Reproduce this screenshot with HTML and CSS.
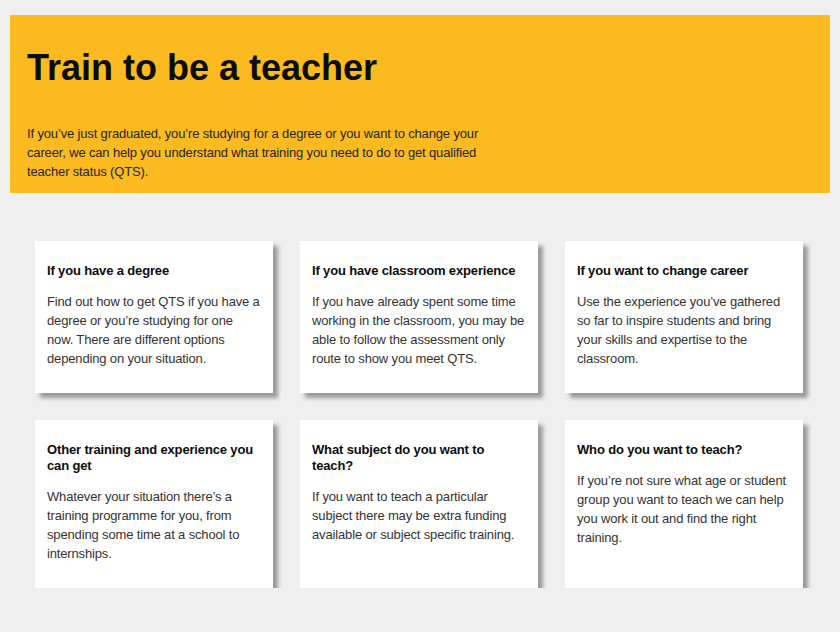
FILE: index.html
```html
<!DOCTYPE html>
<html lang="en">
<head>
<meta charset="utf-8">
<title>Train to be a teacher</title>
<link rel="stylesheet" href="styles.css">
</head>
<body>
<div class="page">
  <header class="hero">
    <h1 class="hero-title">Train to be a teacher</h1>
    <p class="hero-text">If you’ve just graduated, you’re studying for a degree or you want to change your career, we can help you understand what training you need to do to get qualified teacher status (QTS).</p>
  </header>
  <main class="cards">
    <section class="card">
      <h2 class="card-title">If you have a degree</h2>
      <p class="card-text">Find out how to get QTS if you have a degree or you’re studying for one now. There are different options depending on your situation.</p>
    </section>
    <section class="card">
      <h2 class="card-title">If you have classroom experience</h2>
      <p class="card-text">If you have already spent some time working in the classroom, you may be able to follow the assessment only route to show you meet QTS.</p>
    </section>
    <section class="card">
      <h2 class="card-title">If you want to change career</h2>
      <p class="card-text">Use the experience you’ve gathered so far to inspire students and bring your skills and expertise to the classroom.</p>
    </section>
    <section class="card">
      <h2 class="card-title">Other training and experience you can get</h2>
      <p class="card-text">Whatever your situation there’s a training programme for you, from spending some time at a school to internships.</p>
    </section>
    <section class="card">
      <h2 class="card-title">What subject do you want to teach?</h2>
      <p class="card-text">If you want to teach a particular subject there may be extra funding available or subject specific training.</p>
    </section>
    <section class="card">
      <h2 class="card-title">Who do you want to teach?</h2>
      <p class="card-text">If you’re not sure what age or student group you want to teach we can help you work it out and find the right training.</p>
    </section>
  </main>
</div>
</body>
</html>
```

FILE: styles.css
```css
html, body {
  margin: 0;
  padding: 0;
  background: #efefef;
}

body {
  font-family: "Liberation Sans", Arial, sans-serif;
  color: #333333;
}

.page {
  padding: 15px 10px 0 10px;
}

.hero {
  background: #fbba20;
  padding: 30px 17px 12px 17px;
}

.hero-title {
  margin: 0;
  font-size: 36px;
  line-height: 46px;
  font-weight: 700;
  color: #0b0c0c;
}

.hero-text {
  margin: 33px 0 0 0;
  max-width: 470px;
  font-size: 13px;
  line-height: 19px;
  letter-spacing: -0.15px;
  color: #262626;
}

.cards {
  display: grid;
  grid-template-columns: repeat(3, 238px);
  column-gap: 27px;
  row-gap: 27px;
  padding: 48px 0 0 25px;
}

.card {
  background: #ffffff;
  padding: 22px 12px 12px 12px;
  box-shadow: 5px 5px 4px #9a9a9a;
}

.card-title {
  margin: 0;
  font-size: 13px;
  line-height: 16px;
  font-weight: 700;
  letter-spacing: -0.15px;
  color: #0b0c0c;
}

.card-text {
  margin: 13px 0 13px 0;
  font-size: 13px;
  line-height: 19px;
  letter-spacing: -0.15px;
  color: #333333;
}
```
